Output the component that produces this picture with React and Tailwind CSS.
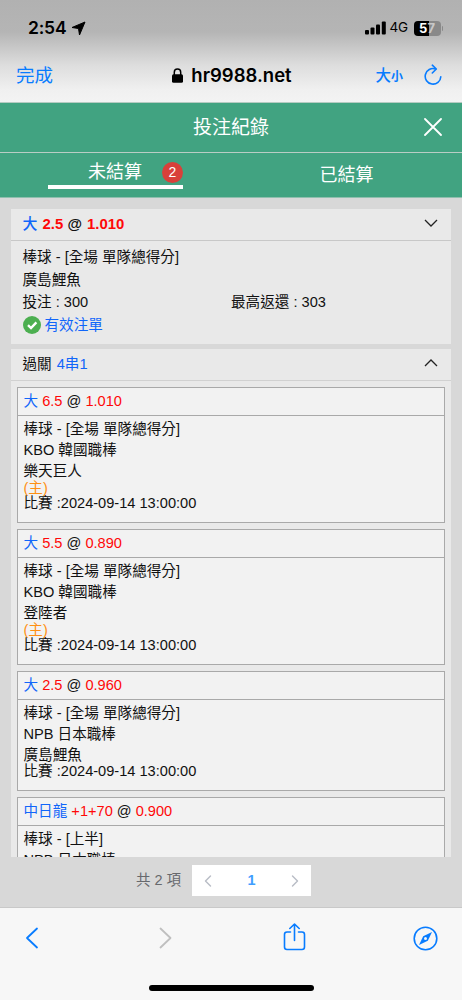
import { ChevronLeft, ChevronRight } from 'lucide-react'

const FONT = "font-['Liberation_Sans','Noto_Sans_CJK_TC',sans-serif]"
const IOS = "font-['Inter','Noto_Sans_CJK_TC',sans-serif]"

const LEGS = [
  { pick: '大', line: '6.5', odds: '1.010', market: '棒球 - [全場 單隊總得分]', league: 'KBO 韓國職棒', team: '樂天巨人', home: true },
  { pick: '大', line: '5.5', odds: '0.890', market: '棒球 - [全場 單隊總得分]', league: 'KBO 韓國職棒', team: '登陸者', home: true },
  { pick: '大', line: '2.5', odds: '0.960', market: '棒球 - [全場 單隊總得分]', league: 'NPB 日本職棒', team: '廣島鯉魚', home: false },
  { pick: '中日龍', line: '+1+70', odds: '0.900', market: '棒球 - [上半]', league: 'NPB 日本職棒' },
]

function StatusBar() {
  return (
    <div className="flex h-14 items-center justify-between pl-7 pr-[19px]">
      <div className="flex items-center gap-[5px]">
        <span className="text-[17.5px] font-semibold leading-none tracking-[-0.2px]">2:54</span>
        <svg width="15" height="15" viewBox="0 0 15 15">
          <path d="M14 1 8.500 14 7.500 7.500 1 6.500Z" fill="black" stroke="black" strokeWidth="1" strokeLinejoin="round" />
        </svg>
      </div>
      <div className="flex items-center">
        <svg width="21" height="14" viewBox="0 0 21 14">
          <rect x="0" y="9" width="4" height="4.500" rx="1" />
          <rect x="5.500" y="6.500" width="4" height="7" rx="1" />
          <rect x="11" y="3.500" width="4" height="10" rx="1" />
          <rect x="16.800" y=".5" width="4" height="13" rx="1" />
        </svg>
        <span className="ml-[4px] w-[18px] text-[13.5px] leading-none tracking-[-0.2px]">4G</span>
        <div className="ml-[6px] flex h-[15px] w-[27px] items-center justify-center rounded-[4px] bg-[linear-gradient(90deg,#000_57%,#898989_57%)] text-[13px] font-bold leading-none">
          <span className="text-white">5</span>
          <span className="text-[#c8c8c8]">7</span>
        </div>
        <span className="ml-px h-[5px] w-[1.5px] rounded-r bg-[#8a8a8a]" />
      </div>
    </div>
  )
}

function AddressBar() {
  return (
    <div className="grid h-[46px] grid-cols-[110px_1fr_110px] items-start pt-[7px]">
      <span className="pl-4 text-[18.5px] leading-6 text-[#087cff]">完成</span>
      <div className="flex items-center justify-center gap-[8px] pl-[2px]">
        <svg width="11" height="15" viewBox="0 0 11 15">
          <rect x="0" y="6.200" width="11" height="8.500" rx="1.500" />
          <path d="M2.300 7V4.200a3.200 3.200 0 0 1 6.400 0V7" fill="none" stroke="black" strokeWidth="1.500" />
        </svg>
        <span className="text-[18.5px] font-semibold leading-6">hr9988.net</span>
      </div>
      <div className="flex justify-end pr-[20px] text-[#087cff]">
        <span className="text-[15.5px] font-medium leading-[25px]">大</span>
        <span className="pt-[2px] text-[12px] font-semibold leading-6">小</span>
        <svg className="ml-[21px] mt-[1px]" width="18" height="22" viewBox="0 0 18 22" fill="none" stroke="currentColor" strokeWidth="1.600" strokeLinecap="round" strokeLinejoin="round">
          <path d="M11.500 4.900A7.800 7.800 0 1 0 16.800 12.700" />
          <path d="M8.300 1.200 12.300 5 8.300 9" />
        </svg>
      </div>
    </div>
  )
}

function Tabs() {
  return (
    <div className="flex h-[45px] border-b border-[#8fbfae] bg-[#41a381] text-[18px] text-white">
      <div className="flex w-1/2 justify-center">
        <div className="mt-[3px] flex h-[33px] w-[135px] items-center border-b-4 border-white pl-[40px] pt-[3px]">
          <span className="leading-none">未結算</span>
          <span className="ml-auto flex size-[21px] items-center justify-center rounded-full bg-[#d9403a] text-[14px]">2</span>
        </div>
      </div>
      <div className="flex w-1/2 items-center justify-center leading-none">已結算</div>
    </div>
  )
}

function Caret({ up }) {
  return (
    <svg className="mb-[3px] ml-auto" width="14" height="8" viewBox="0 0 14 8" fill="none" stroke="#222" strokeWidth="1.300">
      <path d={up ? 'M1 7 7 1l6 6' : 'M1 1l6 6 6-6'} />
    </svg>
  )
}

function SingleBet() {
  return (
    <div className="h-[135px] bg-[#e9e9e9]">
      <div className="flex h-8 items-center border-b border-[#c8c8c8] pl-[11.5px] pr-[13px] text-[14.9px] font-bold">
        <p className="whitespace-pre"><span className="font-medium text-[#1166fa]">大</span> <span className="ml-[1px] text-[#ff0808]">2.5</span> @ <span className="ml-[1px] text-[#ff0808]">1.010</span></p>
        <Caret />
      </div>
      <div className="px-[11.5px] pt-[5px] leading-[22.5px]">
        <p>棒球 - [全場 單隊總得分]</p>
        <p>廣島鯉魚</p>
        <div className="grid grid-cols-2">
          <span>投注 : 300</span>
          <span>最高返還 : 303</span>
        </div>
        <div className="flex items-center gap-[4px] text-[#1166fa]">
          <svg width="18" height="18" viewBox="0 0 18 18">
            <circle cx="9" cy="9" r="9" fill="#4caf50" />
            <path d="m5 9.200 3 2.900 5.400-5.700" fill="none" stroke="white" strokeWidth="2.300" />
          </svg>
          <span>有效注單</span>
        </div>
      </div>
    </div>
  )
}

function Leg({ leg }) {
  return (
    <div className="border border-[#a9a9a9] bg-[#f2f2f2]">
      <p className="h-7 border-b border-[#a9a9a9] pl-[5.5px] leading-[27px] whitespace-pre">
        <span className="text-[#1166fa]">{leg.pick}</span> <span className="text-[#ff0808]">{leg.line}</span> @ <span className="text-[#ff0808]">{leg.odds}</span>
      </p>
      <div className="pb-[11px] pl-[5.5px] pt-[3px] leading-[21px]">
        <p>{leg.market}</p>
        <p>{leg.league}</p>
        {leg.team && <p>{leg.team}</p>}
        {leg.home && <p className="-mt-[2px] mb-[2px] h-4 leading-4 text-[#ff9014]">(主)</p>}
        {leg.team && <p className="-mt-[3px] h-4 leading-4">比賽 :2024-09-14 13:00:00</p>}
      </div>
    </div>
  )
}

function ParlayBet() {
  return (
    <div className="mt-[5px] bg-[#e9e9e9]">
      <div className="flex h-8 items-center border-b border-[#d1d1d1] pl-[11.5px] pr-[13px]">
        <p className="whitespace-pre">過關 <span className="ml-[1px] text-[#1166fa]">4串1</span></p>
        <Caret up />
      </div>
      <div className="flex flex-col gap-[6px] px-[6px] pt-[6px]">
        {LEGS.map((leg) => <Leg key={leg.pick + leg.line} leg={leg} />)}
      </div>
    </div>
  )
}

function Pager() {
  return (
    <div className="flex h-[51px] items-start border-b border-[#c9c9c9] pl-[136px] pt-2">
      <span className="w-[56px] text-[14.5px] leading-[31px] text-[#67696d]">共 2 項</span>
      <div className="flex h-[31px] w-[119px] items-center justify-between bg-white px-[6px] text-[#b9bdc6]">
        <ChevronLeft size={20} strokeWidth={1.7} />
        <span className="text-[14.5px] font-bold text-[#409eff]">1</span>
        <ChevronRight size={20} strokeWidth={1.7} />
      </div>
    </div>
  )
}

function Toolbar() {
  return (
    <div className={`${IOS} flex h-[92px] flex-col bg-[#f7f7f7] text-[#087cff]`}>
      <div className="flex h-[60px] items-center pl-[25px] pr-6">
        <svg width="14" height="22" viewBox="0 0 14 22" fill="none" stroke="currentColor" strokeWidth="1.800" strokeLinecap="round" strokeLinejoin="round">
          <path d="M12 1.500 2 11 12 20.500" />
        </svg>
        <svg className="ml-[120px] text-[#bfbfbf]" width="14" height="22" viewBox="0 0 14 22" fill="none" stroke="currentColor" strokeWidth="1.800" strokeLinecap="round" strokeLinejoin="round">
          <path d="M1.500 1.500 11.500 11 1.500 20.500" />
        </svg>
        <svg className="ml-[110px] mb-[2px]" width="23" height="28" viewBox="0 0 23 28" fill="none" stroke="currentColor" strokeWidth="1.600" strokeLinecap="round" strokeLinejoin="round">
          <path d="M7.500 9H4a2.500 2.500 0 0 0-2.500 2.500v12.500A2.500 2.500 0 0 0 4 26.500h15a2.500 2.500 0 0 0 2.500-2.500V11.500A2.500 2.500 0 0 0 19 9h-3.500" />
          <path d="M11.500 17.500V1.200M6.800 5.500 11.500 1l4.700 4.500" />
        </svg>
        <svg className="ml-auto" width="25" height="25" viewBox="0 0 25 25">
          <circle cx="12.500" cy="12.500" r="11.300" fill="none" stroke="currentColor" strokeWidth="1.600" />
          <path d="M19 6 14.800 14.800 6 19l4.200-8.800Z" fill="currentColor" />
          <circle cx="12.500" cy="12.500" r="1.500" fill="#f7f7f7" />
        </svg>
      </div>
      <div className="mx-auto mt-[17px] h-[6px] w-[165px] rounded-full bg-black" />
    </div>
  )
}

export default function App() {
  return (
    <div className={`${FONT} flex h-[1000px] w-[462px] flex-col overflow-hidden bg-[#d8d8d8] text-[14.6px] text-[#111]`}>
      <header className={`${IOS} h-[103px] shrink-0 border-b border-[#b5cbc2] bg-[linear-gradient(180deg,#b1b1b1_0px,#b5b5b5_32px,#dddddd_65px,#f0f0f0_90px,#f3f3f3_102px)] text-black`}>
        <StatusBar />
        <AddressBar />
      </header>
      <div className="grid h-[50px] shrink-0 grid-cols-[44px_1fr_44px] items-center border-b border-[#b9cdc5] bg-[#41a381] text-white">
        <h1 className="col-start-2 text-center text-[19px] leading-none">投注紀錄</h1>
        <svg width="18" height="18" viewBox="0 0 18 18" stroke="white" strokeWidth="1.800" strokeLinecap="round" className="mb-[2px] ml-[6px]">
          <path d="m1 1 16 16M17 1 1 17" />
        </svg>
      </div>
      <Tabs />
      <main className="mt-[10px] h-[649px] shrink-0 overflow-hidden px-[11px] pt-px">
        <SingleBet />
        <ParlayBet />
      </main>
      <Pager />
      <Toolbar />
    </div>
  )
}
